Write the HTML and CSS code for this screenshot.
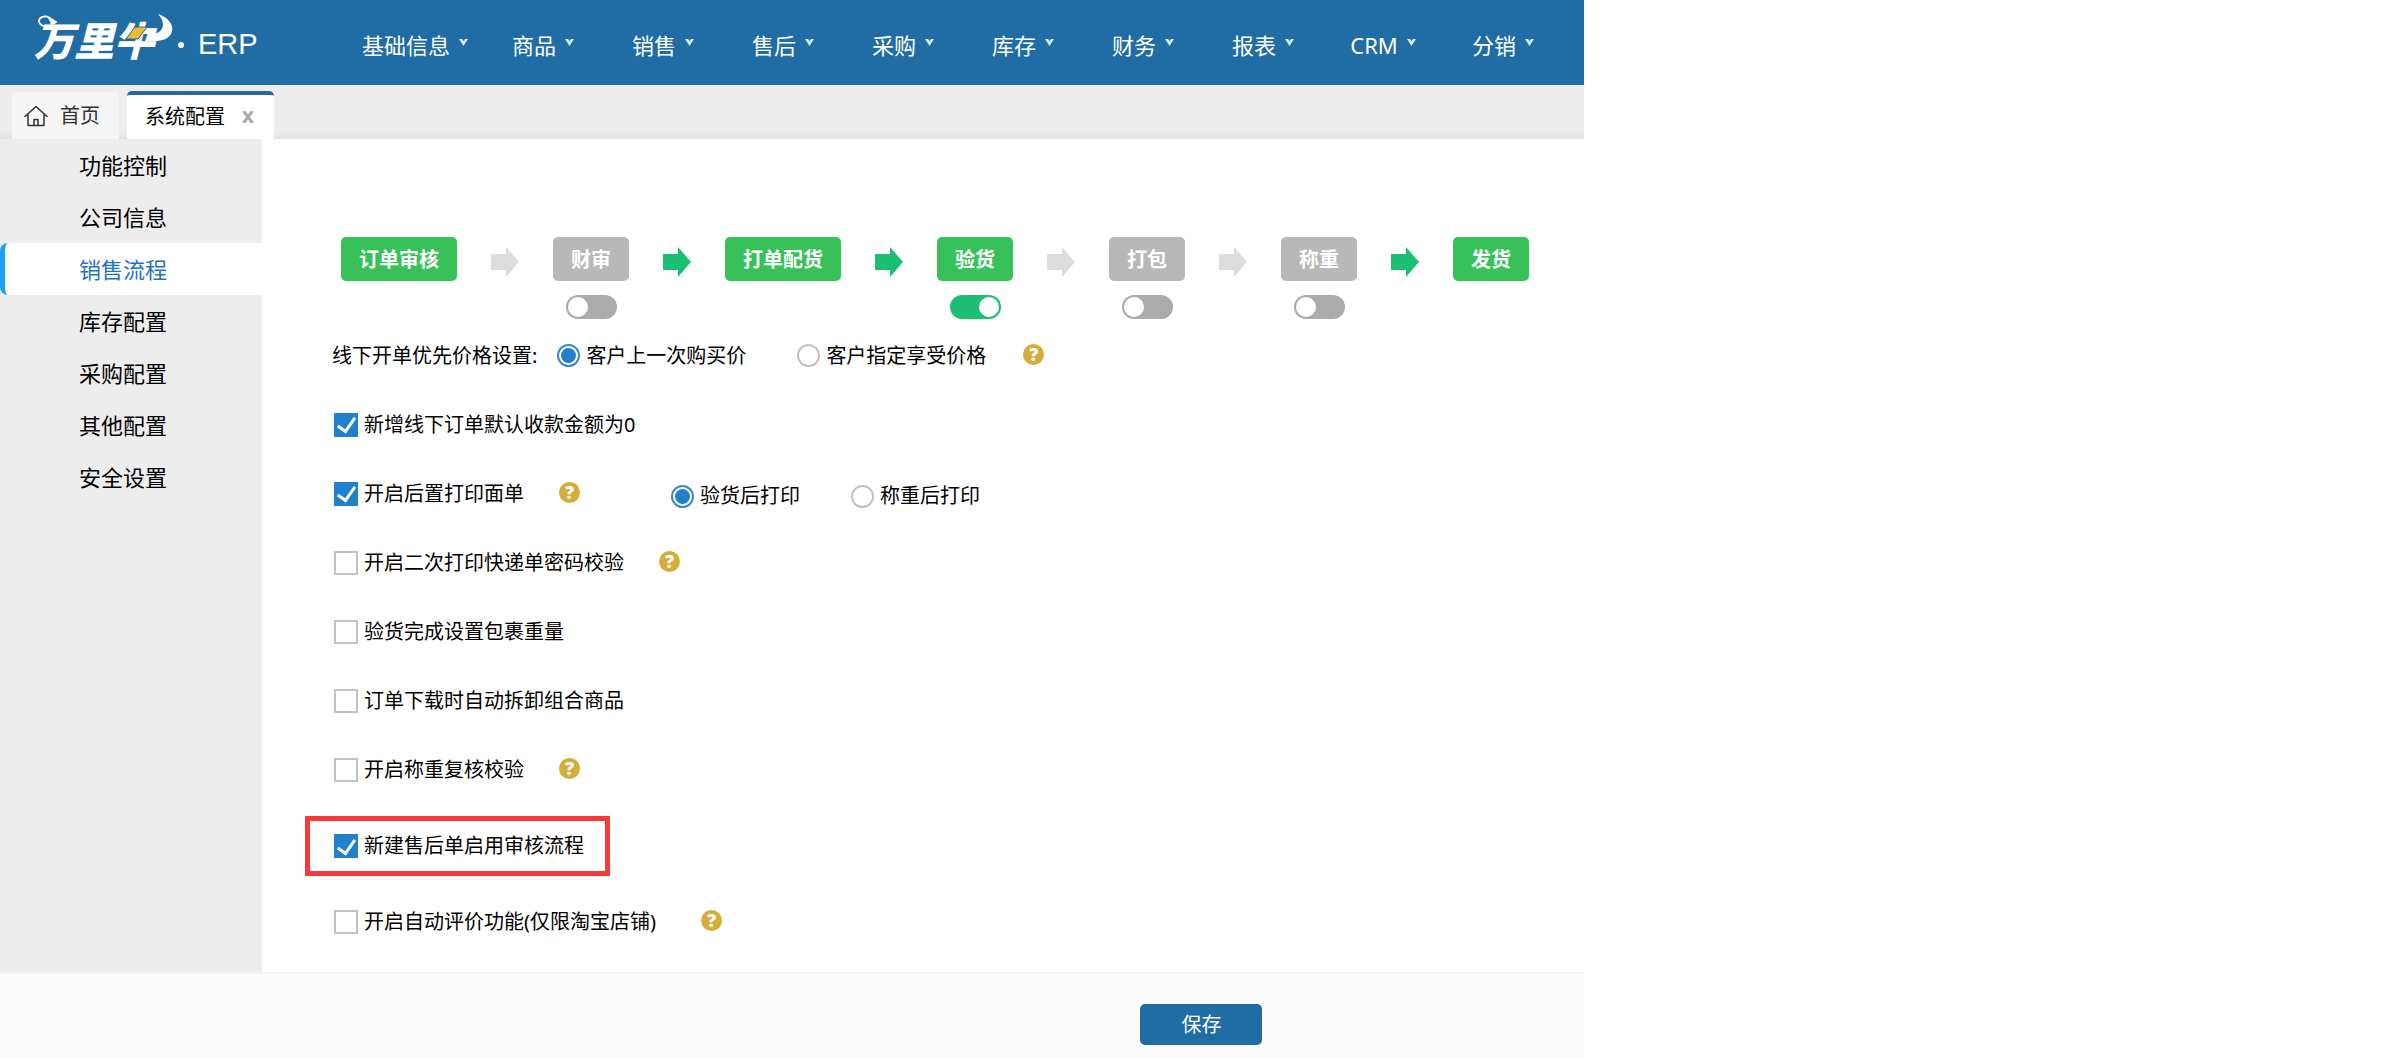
FILE: index.html
```html
<!DOCTYPE html>
<html lang="zh-CN">
<head>
<meta charset="utf-8">
<meta name="viewport" content="width=device-width, initial-scale=1">
<title>系统配置 - 万里牛 ERP</title>
<link rel="stylesheet" href="styles.css">
</head>
<body>
<svg class="sprite" aria-hidden="true">
  <symbol id="caret" viewBox="0 0 9 7"><path d="M0 0h3l1.500 2L6 0h3L4.500 7z" fill="currentColor"/></symbol>
  <symbol id="arrow" viewBox="0 0 28 30"><path d="M0 7h15V0l13 15-13 15v-7H0z" fill="currentColor"/></symbol>
</svg>
<div class="app">
  <header class="topbar">
    <a class="brand" href="#">
      <svg class="brand-mark" viewBox="0 -6 144 68" role="img" aria-label="万里牛">
        <text class="brand-text" x="0" y="42">万里牛</text>
        <path d="M21 14C11 14 5 11 5 7c0-4 6-6 10-3.500 2.500 1.500 4 3 7 4.500-2 1-3 2-5 1.500" fill="none" stroke="#fff" stroke-width="1.800" stroke-linecap="round" stroke-linejoin="round"/>
        <path d="M14 4c3 0 5 3 9 4l-5 3z" fill="#fff"/>
        <path d="M124 0c12 4 17 13 13 20-3 5-9 7-16 7h-10l3-8 4-1 2 2c7-1 14-9 4-20z" fill="#fff"/>
        <path d="M101 13h12l-9 12H92z" fill="#ecb731" stroke="#206ca5" stroke-width="1"/>
      </svg>
      <span class="brand-dot"></span>
      <span class="brand-name">ERP</span>
    </a>
    <nav class="nav">
      <a href="#">基础信息<svg class="caret"><use href="#caret"/></svg></a>
      <a href="#">商品<svg class="caret"><use href="#caret"/></svg></a>
      <a href="#">销售<svg class="caret"><use href="#caret"/></svg></a>
      <a href="#">售后<svg class="caret"><use href="#caret"/></svg></a>
      <a href="#">采购<svg class="caret"><use href="#caret"/></svg></a>
      <a href="#">库存<svg class="caret"><use href="#caret"/></svg></a>
      <a href="#">财务<svg class="caret"><use href="#caret"/></svg></a>
      <a href="#">报表<svg class="caret"><use href="#caret"/></svg></a>
      <a href="#">CRM<svg class="caret"><use href="#caret"/></svg></a>
      <a href="#">分销<svg class="caret"><use href="#caret"/></svg></a>
    </nav>
  </header>

  <div class="tabs">
    <a class="tab" href="#">
      <svg class="home" viewBox="0 0 24 22"><path d="M1 11.500 12 1.500l11 10M4 9.500V20.500h16V9.500M10 20.500v-6h4v6" fill="none" stroke="currentColor" stroke-width="1.500" stroke-linejoin="round" stroke-linecap="round"/></svg>
      首页
    </a>
    <div class="tab tab-active">
      <span>系统配置</span>
      <button class="tab-close" type="button" aria-label="关闭"><svg viewBox="0 0 12 12"><path d="M1.500 0 10.500 12M10.500 0 1.500 12" stroke="currentColor" stroke-width="3"/></svg></button>
    </div>
  </div>

  <div class="body">
    <aside class="sidebar">
      <a href="#">功能控制</a>
      <a href="#">公司信息</a>
      <a class="current" href="#">销售流程</a>
      <a href="#">库存配置</a>
      <a href="#">采购配置</a>
      <a href="#">其他配置</a>
      <a href="#">安全设置</a>
    </aside>

    <main class="content">
      <div class="flow">
        <div class="step"><button class="on" type="button">订单审核</button></div>
        <svg class="arrow"><use href="#arrow"/></svg>
        <div class="step"><button type="button">财审</button><input class="switch" type="checkbox" aria-label="财审"></div>
        <svg class="arrow arrow-on"><use href="#arrow"/></svg>
        <div class="step"><button class="on" type="button">打单配货</button></div>
        <svg class="arrow arrow-on"><use href="#arrow"/></svg>
        <div class="step"><button class="on" type="button">验货</button><input class="switch" type="checkbox" aria-label="验货" checked></div>
        <svg class="arrow"><use href="#arrow"/></svg>
        <div class="step"><button type="button">打包</button><input class="switch" type="checkbox" aria-label="打包"></div>
        <svg class="arrow"><use href="#arrow"/></svg>
        <div class="step"><button type="button">称重</button><input class="switch" type="checkbox" aria-label="称重"></div>
        <svg class="arrow arrow-on"><use href="#arrow"/></svg>
        <div class="step"><button class="on" type="button">发货</button></div>
      </div>

      <div class="row row-price" role="radiogroup" aria-labelledby="price-title">
        <span class="row-title" id="price-title">线下开单优先价格设置:</span>
        <div class="choices">
          <label class="field"><input type="radio" name="price" checked>客户上一次购买价</label>
          <label class="field"><input type="radio" name="price">客户指定享受价格</label>
        </div>
        <button class="help" type="button">?</button>
      </div>
      <div class="row">
        <label class="field"><input type="checkbox" checked>新增线下订单默认收款金额为0</label>
      </div>
      <div class="row">
        <label class="field"><input type="checkbox" checked>开启后置打印面单</label>
        <button class="help" type="button">?</button>
        <div class="choices choices-print">
          <label class="field"><input type="radio" name="print" checked>验货后打印</label>
          <label class="field"><input type="radio" name="print">称重后打印</label>
        </div>
      </div>
      <div class="row">
        <label class="field"><input type="checkbox">开启二次打印快递单密码校验</label>
        <button class="help" type="button">?</button>
      </div>
      <div class="row">
        <label class="field"><input type="checkbox">验货完成设置包裹重量</label>
      </div>
      <div class="row">
        <label class="field"><input type="checkbox">订单下载时自动拆卸组合商品</label>
      </div>
      <div class="row">
        <label class="field"><input type="checkbox">开启称重复核校验</label>
        <button class="help" type="button">?</button>
      </div>
      <div class="row row-marked">
        <label class="field"><input type="checkbox" checked>新建售后单启用审核流程</label>
      </div>
      <div class="row row-wide">
        <label class="field"><input type="checkbox">开启自动评价功能(仅限淘宝店铺)</label>
        <button class="help" type="button">?</button>
      </div>
    </main>
  </div>

  <footer class="footer"><button class="save" type="button">保存</button></footer>
</div>
</body>
</html>
```
FILE: styles.css
```css
* { box-sizing: border-box; }

body {
  margin: 0;
  background: #fff;
  color: #000;
  font: 20px/28px "Noto Sans", "Noto Sans CJK SC", sans-serif;
}

a { color: inherit; text-decoration: none; }
button { font: inherit; border: 0; padding: 0; cursor: pointer; }
svg { display: block; flex: none; }
.sprite { position: absolute; width: 0; height: 0; }

.app {
  display: flex;
  flex-direction: column;
  width: 66%;
  min-height: 100vh;
}

/* Top bar */
.topbar {
  display: flex;
  height: 85px;
  background: #206ca5;
  color: #fff;
}
.brand {
  display: flex;
  flex: none;
  align-items: flex-start;
  width: 347px;
  padding: 8px 0 0 34px;
}
.brand-mark { width: 144px; height: 68px; }
.brand-text {
  font: italic 900 40px "Noto Sans CJK SC", sans-serif;
  fill: #fff;
}
.brand-dot {
  width: 6px;
  height: 6px;
  margin: 34px 14px 0 0;
  border-radius: 50%;
  background: #fff;
}
.brand-name {
  padding-top: 19px;
  font: 29px/34px "Liberation Sans", Arial, sans-serif;
}
.nav { display: flex; padding-top: 4px; }
.nav a {
  display: flex;
  align-items: center;
  justify-content: center;
  gap: 9px;
  min-width: 120px;
  padding: 0 15px;
  font-size: 22px;
}
.caret { width: 9px; height: 7px; margin-bottom: 4px; color: #dbe9f5; }

/* Tabs */
.tabs {
  display: flex;
  align-items: flex-end;
  gap: 8px;
  height: 54px;
  padding-left: 12px;
  background: linear-gradient(#ededed 46px, #e2e2e2);
}
.tab {
  display: flex;
  align-items: center;
  gap: 12px;
  height: 47px;
  padding: 0 19px 0 12px;
  border-radius: 5px 5px 0 0;
  background: #f5f5f5;
  color: #333;
}
.home { width: 24px; height: 22px; }
.tab-active {
  gap: 17px;
  height: 48px;
  padding: 0 20px 0 18px;
  border-top: 4px solid #2868a2;
  background: #fff;
  color: #000;
}
.tab-close { background: none; color: #aaa; }
.tab-close svg { width: 12px; height: 12px; }

/* Body */
.body { display: flex; flex: 1; }
.sidebar {
  flex: none;
  width: 262px;
  background: #ededed;
  font-size: 22px;
}
.sidebar a {
  display: block;
  padding-left: 79px;
  line-height: 52px;
}
.sidebar .current {
  padding-left: 74px;
  border-left: 5px solid #1b9ffb;
  border-radius: 8px 0 0 8px;
  background: #fff;
  color: #2373c4;
}
.content { flex: 1; padding: 98px 0 16px; }

/* Order flow */
.flow {
  display: flex;
  align-items: flex-start;
  gap: 34px;
  margin-bottom: 2px;
  padding-left: 79px;
}
.step {
  display: flex;
  flex-direction: column;
  align-items: center;
  gap: 14px;
}
.step button {
  height: 44px;
  padding: 0 18px;
  border-radius: 5px;
  background: #b8b8b8;
  color: #fff;
  font-family: "Noto Sans CJK SC", sans-serif;
  font-weight: 700;
  white-space: nowrap;
}
.step .on { background: #37c159; }
.arrow { width: 28px; height: 30px; margin-top: 10px; color: #dcdcdc; }
.arrow-on { color: #1dbf73; }
.switch {
  appearance: none;
  display: flex;
  width: 51px;
  height: 24px;
  margin: 0;
  padding: 2px;
  border-radius: 12px;
  background: #ababab;
}
.switch::before {
  content: "";
  width: 20px;
  height: 20px;
  border-radius: 50%;
  background: #fff;
}
.switch:checked { justify-content: flex-end; background: #1dbf73; }

/* Options */
.row {
  display: flex;
  align-items: center;
  gap: 35px;
  height: 69px;
  padding-left: 72px;
  white-space: nowrap;
}
.row-price { gap: 37px; padding-left: 70px; }
.row-title { margin-right: -17px; }
.choices { display: flex; gap: 51px; }
.choices-print { margin-left: 56px; padding-top: 5px; }
.row-wide { gap: 45px; }
.row-marked {
  width: fit-content;
  height: 60px;
  margin: 12px 0 11px 43px;
  padding: 0 21px 0 24px;
  border: 5px solid #f9383a;
}
.field { display: flex; align-items: center; gap: 6px; }
.field input {
  appearance: none;
  display: grid;
  place-content: center;
  flex: none;
  width: 24px;
  height: 24px;
  margin: 0;
  border: 2px solid #c2c2c2;
  background: #fff;
}
.field [type="checkbox"]:checked { border-color: #1f80cc; background: #1f80cc; }
.field [type="checkbox"]:checked::before {
  content: "";
  width: 8px;
  height: 15px;
  margin-bottom: 3px;
  border: solid #fff;
  border-width: 0 3px 3px 0;
  transform: rotate(35deg);
}
.field [type="radio"] { width: 23px; height: 23px; border-radius: 50%; }
.field [type="radio"]:checked { border-color: #3a87cf; }
.field [type="radio"]:checked::before {
  content: "";
  width: 15px;
  height: 15px;
  border-radius: 50%;
  background: #1f80cc;
}
.help {
  width: 21px;
  height: 21px;
  margin-bottom: 3px;
  border-radius: 50%;
  background: #d6ad3b;
  color: #fff;
  font: 800 18px/21px "Open Sans", sans-serif;
}

/* Footer */
.footer {
  padding: 30px 0 13px 72%;
  border-top: 2px solid #f3f3f3;
  background: #fcfcfc;
}
.save {
  display: block;
  width: 122px;
  height: 41px;
  border-radius: 5px;
  background: #206ca5;
  color: #fff;
}
```
